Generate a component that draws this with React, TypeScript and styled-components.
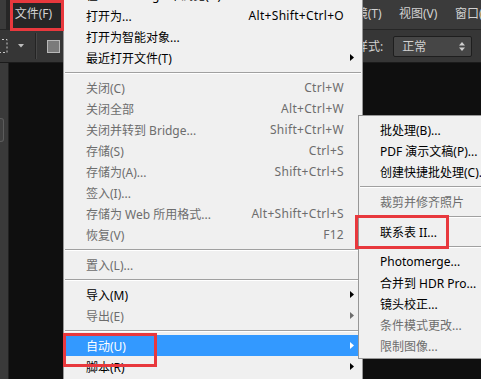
import styled, { createGlobalStyle } from "styled-components";

const GlobalStyle = createGlobalStyle`
  html, body {
    margin: 0;
    padding: 0;
    background: #0f0f0f;
  }
  body {
    font-family: "Noto Sans", "Noto Sans CJK SC", sans-serif;
    font-size: 12px;
    overflow: hidden;
  }
`;

const Screen = styled.div`
  position: relative;
  display: flex;
  flex-direction: column;
  width: 481px;
  height: 379px;
  overflow: hidden;
  background: #0f0f0f;
`;

const MenuBar = styled.div`
  display: flex;
  flex-shrink: 0;
  height: 29px;
  padding-left: 6px;
  background: #3b3b3b;
  border-bottom: 1px solid #262626;
`;

const MenuTitle = styled.div<{ $active?: boolean }>`
  flex-shrink: 0;
  padding: 0 8.75px;
  line-height: 28px;
  color: #d2d2d2;
  white-space: nowrap;
  background: ${(p) => (p.$active ? "#262626" : "transparent")};
`;

const OptionsBar = styled.div`
  display: flex;
  flex-shrink: 0;
  align-items: center;
  height: 32px;
  background: #363636;
  border-bottom: 1px solid #1b1b1b;
  color: #d2d2d2;
  white-space: nowrap;

  & > * {
    flex-shrink: 0;
  }
`;

const Caret = styled.svg`
  margin-left: 10px;
`;

const Divider = styled.div<{ $gap: number }>`
  width: 1px;
  height: 26px;
  margin-left: ${(p) => p.$gap}px;
  background: #242424;
  box-shadow: 1px 0 0 #474747;
`;

const ShapeSwatch = styled.div`
  width: 11px;
  height: 11px;
  margin-left: 11px;
  background: #7b7b7b;
  border: 1px solid #b8b8b8;
`;

const StyleLabel = styled.span`
  margin-left: 288px;
`;

const Select = styled.div`
  display: flex;
  align-items: center;
  justify-content: space-between;
  box-sizing: border-box;
  width: 79px;
  height: 21px;
  margin-left: 10px;
  padding: 0 6px 0 8px;
  background: #464646;
  border: 1px solid #1e1e1e;
  border-radius: 2px;
`;

const TrailingLabel = styled.span`
  margin-left: 11px;
`;

const Workspace = styled.div`
  display: flex;
  flex: 1;
`;

const LeftDock = styled.div`
  width: 8px;
  background: #3a3a3a;
  border-right: 1px solid #222222;
`;

const DockTab = styled.div`
  width: 3px;
  height: 22px;
  margin-top: 55px;
  border: 1px solid #5c5c5c;
  border-left: none;
  border-radius: 0 3px 3px 0;
  background: #404040;
`;

const Canvas = styled.div`
  flex: 1;
  background: #0f0f0f;
`;

const Dropdown = styled.div<{ $left: number; $top: number; $width: number; $indent: number }>`
  position: absolute;
  left: ${(p) => p.$left}px;
  top: ${(p) => p.$top}px;
  width: ${(p) => p.$width}px;
  padding: 3px 0 2px;
  background: #f0f0f0;
  border: 1px solid #979797;
  --indent: ${(p) => p.$indent}px;
`;

const Item = styled.div<{ $disabled?: boolean; $active?: boolean }>`
  display: flex;
  align-items: center;
  height: 21px;
  padding: 0 8px 0 var(--indent);
  white-space: nowrap;
  color: ${(p) => (p.$active ? "#ffffff" : p.$disabled ? "#6d6d6d" : "#000000")};
  background: ${(p) => (p.$active ? "#3399ff" : "transparent")};
`;

const Label = styled.span`
  flex: 1;
`;

const Shortcut = styled.span`
  letter-spacing: 0.3px;
`;

const ArrowCell = styled.span`
  display: flex;
  justify-content: flex-end;
  width: 10px;
`;

const Separator = styled.div`
  display: flex;
  align-items: center;
  height: 9px;

  &::before {
    content: "";
    flex: 1;
    margin: 0 1px;
    border-top: 1px solid #a0a0a0;
    border-bottom: 1px solid #ffffff;
  }
`;

const Callout = styled.div<{ $x: number; $y: number; $w: number; $h: number }>`
  position: absolute;
  left: ${(p) => p.$x}px;
  top: ${(p) => p.$y}px;
  width: ${(p) => p.$w}px;
  height: ${(p) => p.$h}px;
  box-sizing: border-box;
  border: 3px solid #e8383d;
`;

type Entry =
  | { sep: true }
  | { label: string; shortcut?: string; sub?: boolean; disabled?: boolean; active?: boolean };

const fileMenu: Entry[] = [
  { label: "在 Mini Bridge 中浏览(G)..." },
  { label: "打开为...", shortcut: "Alt+Shift+Ctrl+O" },
  { label: "打开为智能对象..." },
  { label: "最近打开文件(T)", sub: true },
  { sep: true },
  { label: "关闭(C)", shortcut: "Ctrl+W", disabled: true },
  { label: "关闭全部", shortcut: "Alt+Ctrl+W", disabled: true },
  { label: "关闭并转到 Bridge...", shortcut: "Shift+Ctrl+W", disabled: true },
  { label: "存储(S)", shortcut: "Ctrl+S", disabled: true },
  { label: "存储为(A)...", shortcut: "Shift+Ctrl+S", disabled: true },
  { label: "签入(I)...", disabled: true },
  { label: "存储为 Web 所用格式...", shortcut: "Alt+Shift+Ctrl+S", disabled: true },
  { label: "恢复(V)", shortcut: "F12", disabled: true },
  { sep: true },
  { label: "置入(L)...", disabled: true },
  { sep: true },
  { label: "导入(M)", sub: true },
  { label: "导出(E)", sub: true, disabled: true },
  { sep: true },
  { label: "自动(U)", sub: true, active: true },
  { label: "脚本(R)", sub: true },
];

const automateMenu: Entry[] = [
  { label: "批处理(B)..." },
  { label: "PDF 演示文稿(P)..." },
  { label: "创建快捷批处理(C)..." },
  { sep: true },
  { label: "裁剪并修齐照片", disabled: true },
  { sep: true },
  { label: "联系表 II..." },
  { sep: true },
  { label: "Photomerge..." },
  { label: "合并到 HDR Pro..." },
  { label: "镜头校正..." },
  { label: "条件模式更改...", disabled: true },
  { label: "限制图像...", disabled: true },
];

const menuTitles = ["文件(F)", "编辑(E)", "图像(I)", "图层(L)", "文字(Y)", "选择(S)", "滤镜(T)", "视图(V)", "窗口(W)", "帮助(H)"];

function SubArrow() {
  return (
    <svg width="4" height="7" viewBox="0 0 4 7">
      <polygon points="0,0 4,3.5 0,7" fill="currentColor" />
    </svg>
  );
}

function MenuList({ entries, withKeys }: { entries: Entry[]; withKeys?: boolean }) {
  return (
    <>
      {entries.map((e, i) =>
        "sep" in e ? (
          <Separator key={i} />
        ) : (
          <Item key={i} $disabled={e.disabled} $active={e.active}>
            <Label>{e.label}</Label>
            {e.shortcut && <Shortcut>{e.shortcut}</Shortcut>}
            {withKeys && <ArrowCell>{e.sub && <SubArrow />}</ArrowCell>}
          </Item>
        )
      )}
    </>
  );
}

export default function App() {
  return (
    <>
      <GlobalStyle />
      <Screen>
        <MenuBar>
          {menuTitles.map((t, i) => (
            <MenuTitle key={t} $active={i === 0}>
              {t}
            </MenuTitle>
          ))}
        </MenuBar>
        <OptionsBar>
          <svg width="8" height="15" viewBox="0 0 8 15">
            <rect x="-6" y="0.5" width="13" height="13" fill="none" stroke="#c9c9c9" strokeDasharray="2 2" />
          </svg>
          <Caret width="6" height="4" viewBox="0 0 6 4">
            <polygon points="0,0 6,0 3,3.5" fill="#bdbdbd" />
          </Caret>
          <Divider $gap={11} />
          <ShapeSwatch />
          <Divider $gap={7} />
          <StyleLabel>样式:</StyleLabel>
          <Select>
            <span>正常</span>
            <svg width="6" height="9" viewBox="0 0 6 9">
              <polygon points="0,3.5 3,0 6,3.5" fill="#cfcfcf" />
              <polygon points="0,5.5 6,5.5 3,9" fill="#cfcfcf" />
            </svg>
          </Select>
          <TrailingLabel>宽度:</TrailingLabel>
        </OptionsBar>
        <Workspace>
          <LeftDock>
            <DockTab />
          </LeftDock>
          <Canvas />
        </Workspace>

        <Dropdown $left={63} $top={-20} $width={298} $indent={22}>
          <MenuList entries={fileMenu} withKeys />
        </Dropdown>
        <Dropdown $left={358} $top={115} $width={180} $indent={21}>
          <MenuList entries={automateMenu} />
        </Dropdown>

        <Callout $x={10} $y={0} $w={54} $h={31} />
        <Callout $x={63} $y={333} $w={94} $h={34} />
        <Callout $x={355} $y={215} $w={94} $h={34} />
      </Screen>
    </>
  );
}
